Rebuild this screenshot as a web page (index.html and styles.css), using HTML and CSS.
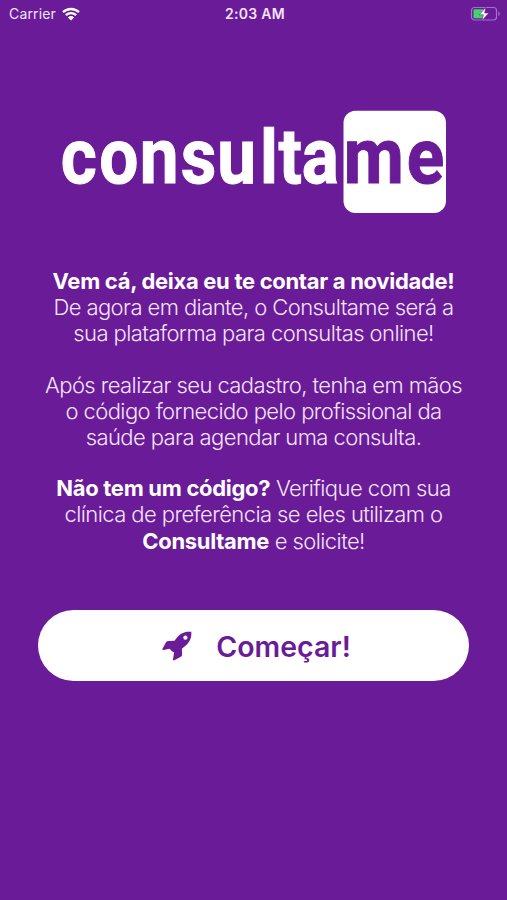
FILE: index.html
```html
<!doctype html>
<html lang="pt-BR">
  <head>
    <meta charset="UTF-8">
    <meta name="viewport" content="width=device-width, initial-scale=1.0">
    <title>Consultame</title>
    <link rel="stylesheet" href="styles.css">
  </head>
  <body>
    <header class="status-bar">
      <div class="carrier">
        <span>Carrier</span>
        <svg class="wifi" viewBox="0 0 18 14" width="18" height="14">
          <path d="M1 5.2a11.6 11.6 0 0 1 16 0" />
          <path d="M3.9 8.2a7.4 7.4 0 0 1 10.2 0" />
          <path class="dot" d="M9 13.6 5.9 10.4a4.5 4.5 0 0 1 6.2 0z" />
        </svg>
      </div>
      <div class="time">2:03 AM</div>
      <svg class="battery" viewBox="0 0 31 16" width="31" height="16">
        <rect class="case" x="1.5" y="1.5" width="25" height="12.5" rx="3" />
        <rect class="level" x="3.5" y="3.3" width="11" height="9" rx="1" />
        <path class="tip" d="M28.3 5.2q3 2.5 0 5z" />
        <path class="bolt" d="M15.8 1.2 9.2 8.8h4.2L11.8 14.7 19 7h-4.3z" />
      </svg>
    </header>

    <main class="container">
      <svg class="logo" viewBox="-10 0 406 104" width="406" height="104">
        <rect class="logo-box" x="282.500" y="0.7" width="102.500" height="102.300" rx="12" />
        <g transform="scale(0.9 1)">
          <text class="logo-text" y="73.500" x="-0.3 42.400 87.600 133 173.700 221 241.800 267.500">consu<tspan class="logo-l">l</tspan>ta</text>
          <text class="logo-text logo-me" y="73.500" x="314.300 384.200">me</text>
        </g>
      </svg>

      <section class="intro">
        <p>
          <strong>Vem cá, deixa eu te contar a novidade!</strong><br>
          De agora em diante, o Consultame será a<br>
          sua plataforma para consultas online!
        </p>
        <p>
          Após realizar seu cadastro, tenha em mãos<br>
          o código fornecido pelo profissional da<br>
          saúde para agendar uma consulta.
        </p>
        <p>
          <strong>Não tem um código?</strong> Verifique com sua<br>
          clínica de preferência se eles utilizam o<br>
          <strong>Consultame</strong> e solicite!
        </p>
      </section>

      <button class="start-btn" type="button">
        <svg class="rocket" viewBox="0 0 30 30" width="30" height="30">
          <path d="M29.3.8C22 .2 17.300 2.500 12.600 9.800L6.300 9.900C5 10 4.500 10.400 4 11.300L.5 17.800C.1 18.800.7 19.200 1.600 19L7.600 17.800L8.600 18.800Q9.600 20.200 12.100 21.500L11 28.200C10.900 29.300 11.500 29.600 12.400 29.200L18.800 25.800C19.600 25.300 20 24.800 20.100 23.900L19.900 17.700C27 12.800 29.900 8.100 29.300.8Z" />
          <circle cx="23.400" cy="6.700" r="2.100" />
        </svg>
        <span>Começar!</span>
      </button>
    </main>
  </body>
</html>
```
FILE: styles.css
```css
body {
  font-family: Inter, "Liberation Sans", sans-serif;
  background: #6a1b98;
  color: #fff;
  margin: 0;
  min-height: 100vh;
}

.status-bar {
  display: grid;
  grid-template-columns: 1fr auto 1fr;
  align-items: center;
  height: 27px;
  padding: 0 6px 0 9px;
  font-size: 14px;
  color: #f3e3fb;
}

.carrier {
  display: flex;
  align-items: center;
  gap: 6px;
  letter-spacing: 0.15px;
}

.wifi {
  fill: none;
  stroke: #fff;
  stroke-width: 2.3;
}

.wifi .dot {
  fill: #fff;
  stroke: none;
}

.time {
  font-weight: 600;
  letter-spacing: 0.3px;
}

.battery {
  justify-self: end;
}

.case {
  fill: none;
  stroke: #a66fc8;
  stroke-width: 1.2;
}

.level {
  fill: #3fd56a;
}

.tip {
  fill: #a66fc8;
}

.bolt {
  fill: #fff;
  stroke: #6a1b98;
  stroke-width: 0.6;
}

.container {
  display: flex;
  flex-direction: column;
  align-items: center;
  padding-top: 83px;
}

.logo {
  display: block;
  overflow: visible;
}

.logo-box {
  fill: #fff;
}

.logo-text {
  font-family: Roboto, sans-serif;
  font-size: 77px;
  font-weight: 700;
  fill: #fff;
  stroke: #fff;
  stroke-width: 1px;
}

.logo-l {
  font-size: 75px;
}

.logo-me {
  fill: #6a1b98;
  stroke: #6a1b98;
}

.intro {
  margin-top: 54px;
  text-align: center;
  white-space: nowrap;
  font-size: 22px;
  font-weight: 300;
  line-height: 26.2px;
  letter-spacing: -0.58px;
  color: #f3e3fb;
}

.intro p {
  margin: 0 0 25px;
}

.intro strong {
  font-weight: 700;
  letter-spacing: -0.3px;
  color: #fff;
}

.start-btn {
  display: flex;
  align-items: center;
  justify-content: center;
  gap: 24px;
  width: 431px;
  height: 71px;
  margin-top: 31px;
  padding: 2px 0 0 6px;
  border: none;
  border-radius: 36px;
  background: #fff;
  color: #6a1b98;
  font-family: inherit;
  font-size: 28.5px;
  font-weight: 600;
  cursor: pointer;
}

.rocket {
  fill: #6a1b98;
}

.rocket circle {
  fill: #fff;
}
```
